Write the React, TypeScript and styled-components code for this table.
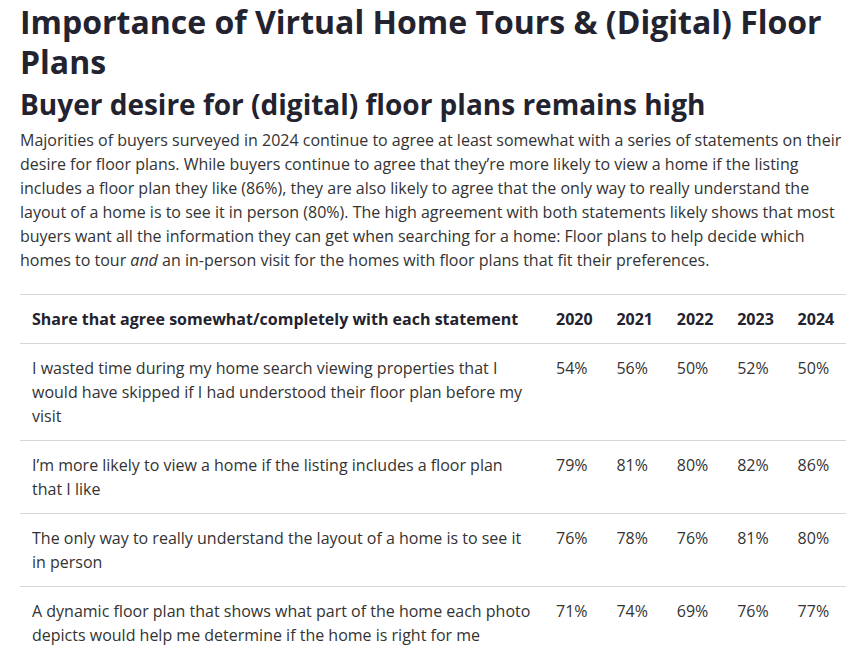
import React from "react";
import styled, { createGlobalStyle } from "styled-components";

const Global = createGlobalStyle`
  html, body { margin: 0; padding: 0; background: #fff; }
  body { font-family: "Open Sans", "Liberation Sans", sans-serif; color: #333; }
`;

const Page = styled.main`
  padding: 2px 7px 0 20px;
`;

const Title = styled.h1`
  margin: 0;
  font-size: 32px;
  line-height: 40px;
  font-weight: 700;
  color: #23232f;
`;

const Subtitle = styled.h2`
  margin: 4px 0 0;
  font-size: 28px;
  line-height: 36px;
  font-weight: 700;
  color: #23232f;
`;

const Para = styled.p`
  margin: 6px 0 0;
  font-size: 16px;
  line-height: 24px;
  color: #333;
`;

const Table = styled.table`
  margin-top: 22px;
  width: 826px;
  border-collapse: collapse;
  table-layout: fixed;
  font-size: 16px;
  line-height: 24px;
`;

const Th = styled.th<{ $year?: boolean }>`
  text-align: left;
  font-weight: 700;
  color: #23232f;
  padding: 12px ${(p) => (p.$year ? "0" : "12px")} 12px 12px;
  border-top: 1px solid #d6d6d6;
  border-bottom: 1px solid #d6d6d6;
`;

const Td = styled.td<{ $year?: boolean }>`
  vertical-align: top;
  color: #333;
  padding: 12px ${(p) => (p.$year ? "0" : "12px")} 12px 12px;
  border-bottom: 1px solid #d6d6d6;
`;

const FirstCol = styled.col`
  width: 524px;
`;

const YearCol = styled.col`
  width: 60.4px;
`;

const years = ["2020", "2021", "2022", "2023", "2024"];
const rows: [string, string[]][] = [
  [
    "I wasted time during my home search viewing properties that I would have skipped if I had understood their floor plan before my visit",
    ["54%", "56%", "50%", "52%", "50%"],
  ],
  [
    "I’m more likely to view a home if the listing includes a floor plan that I like",
    ["79%", "81%", "80%", "82%", "86%"],
  ],
  [
    "The only way to really understand the layout of a home is to see it in person",
    ["76%", "78%", "76%", "81%", "80%"],
  ],
  [
    "A dynamic floor plan that shows what part of the home each photo depicts would help me determine if the home is right for me",
    ["71%", "74%", "69%", "76%", "77%"],
  ],
];

export default function App() {
  return (
    <Page>
      <Global />
      <Title>Importance of Virtual Home Tours &amp; (Digital) Floor Plans</Title>
      <Subtitle>Buyer desire for (digital) floor plans remains high</Subtitle>
      <Para>
        Majorities of buyers surveyed in 2024 continue to agree at least somewhat with a series of
        statements on their desire for floor plans. While buyers continue to agree that they’re more
        likely to view a home if the listing includes a floor plan they like (86%), they are also likely
        to agree that the only way to really understand the layout of a home is to see it in person
        (80%). The high agreement with both statements likely shows that most buyers want all the
        information they can get when searching for a home: Floor plans to help decide which homes to
        tour <em>and</em> an in-person visit for the homes with floor plans that fit their preferences.
      </Para>
      <Table>
        <colgroup>
          <FirstCol />
          {years.map((y) => (
            <YearCol key={y} />
          ))}
        </colgroup>
        <thead>
          <tr>
            <Th>Share that agree somewhat/completely with each statement</Th>
            {years.map((y) => (
              <Th key={y} $year>
                {y}
              </Th>
            ))}
          </tr>
        </thead>
        <tbody>
          {rows.map(([label, vals]) => (
            <tr key={label}>
              <Td>{label}</Td>
              {vals.map((v, i) => (
                <Td key={i} $year>
                  {v}
                </Td>
              ))}
            </tr>
          ))}
        </tbody>
      </Table>
    </Page>
  );
}
